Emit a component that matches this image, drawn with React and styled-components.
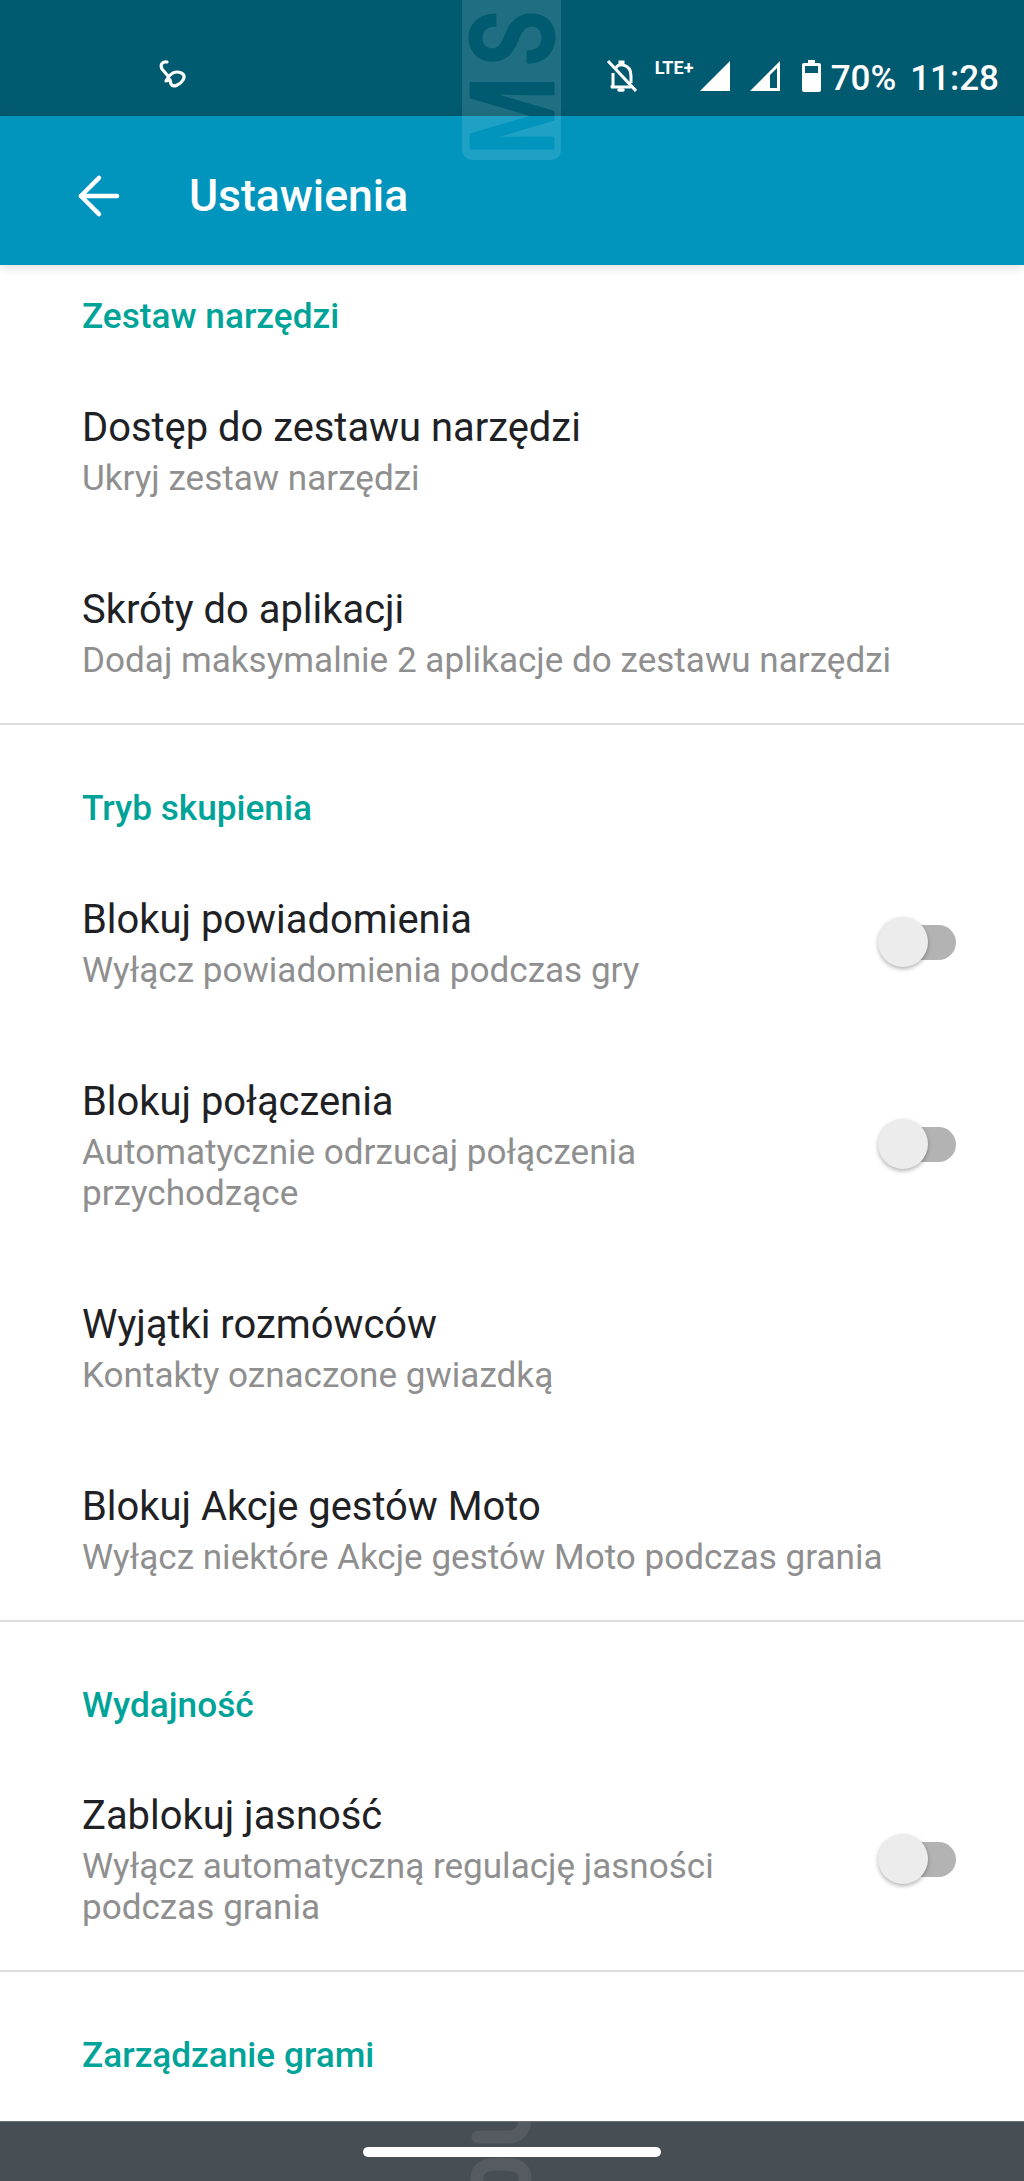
import React from 'react';
import styled, { createGlobalStyle } from 'styled-components';
import { ArrowLeft } from 'lucide-react';

const GlobalStyle = createGlobalStyle`
  html, body {
    margin: 0;
    padding: 0;
    background: #fff;
  }
  body {
    font-family: Roboto, "Noto Sans", sans-serif;
  }
`;

const Page = styled.div`
  position: relative;
  width: 1024px;
  height: 2181px;
  display: flex;
  flex-direction: column;
  overflow: hidden;
  background: #fff;
`;

const StatusBar = styled.div`
  height: 116px;
  flex: none;
  display: flex;
  align-items: flex-start;
  justify-content: space-between;
  padding: 60px 25px 0 158px;
  box-sizing: border-box;
  background: #005a70;
  color: #fff;
`;

const StatusRight = styled.div`
  display: flex;
  align-items: flex-start;
`;

const StatusIcon = styled.svg`
  display: block;
  flex: none;
  margin-left: ${(p) => p.$gap || 0}px;
`;

const NetworkLabel = styled.span`
  font-size: 18px;
  font-weight: 700;
  line-height: 15px;
  margin-left: 18px;
  width: 39px;
  white-space: nowrap;
`;

const StatusText = styled.span`
  font-size: 35px;
  font-weight: 500;
  line-height: 35px;
  margin-left: ${(p) => p.$gap}px;
  padding-top: 1px;
`;

const Watermark = styled.svg`
  position: absolute;
  top: 0;
  left: 462px;
  z-index: 2;
  pointer-events: none;
`;

const AppBar = styled.header`
  height: 149px;
  flex: none;
  display: flex;
  align-items: center;
  padding: 10px 0 0 68px;
  box-sizing: border-box;
  background: #0195bd;
  color: #fff;
  box-shadow: 0 3px 10px rgba(0, 0, 0, 0.12);
  z-index: 1;
`;

const BackArrow = styled(ArrowLeft)`
  flex: none;
`;

const AppTitle = styled.h1`
  margin: 0 0 0 59px;
  font-size: 44.5px;
  font-weight: 500;
  line-height: 52px;
`;

const List = styled.main`
  flex: 1;
  min-height: 0;
`;

const Section = styled.section`
  border-bottom: ${(p) => (p.$last ? 'none' : '2px solid #dcdcdc')};
`;

const SectionTitle = styled.h2`
  margin: 0;
  padding: 59px 82px 18.5px;
  font-size: 35.2px;
  font-weight: 500;
  line-height: 48px;
  color: #00a398;

  ${Section}:first-child & {
    padding: 27px 82px 19px;
  }
`;

const Row = styled.div`
  display: flex;
  align-items: center;
  padding: 43px 68px 42px 82px;
`;

const RowText = styled.div`
  flex: 1;
  min-width: 0;
  padding-right: ${(p) => (p.$toggle ? '82px' : '0')};
`;

const RowTitle = styled.div`
  font-size: 39.9px;
  line-height: 51px;
  color: #202124;
`;

const RowSub = styled.div`
  margin-top: 5px;
  font-size: 35.1px;
  line-height: 41px;
  color: #8f8f8f;
`;

const Toggle = styled.div`
  position: relative;
  flex: none;
  width: 72px;
  height: 35px;
  border-radius: 18px;
  background: #b3b3b3;
`;

const Thumb = styled.div`
  position: absolute;
  left: -6px;
  top: -8px;
  width: 50px;
  height: 50px;
  border-radius: 50%;
  background: #ececec;
  box-shadow: 0 2px 4px rgba(0, 0, 0, 0.3);
`;

const NavBar = styled.footer`
  position: relative;
  height: 60px;
  flex: none;
  display: flex;
  justify-content: center;
  padding-top: 25px;
  box-sizing: border-box;
  background: #474e54;
  border-top: 1px solid #6b7074;
`;

const NavMark = styled.svg`
  position: absolute;
  top: 0;
  left: 462px;
`;

const HomePill = styled.div`
  position: relative;
  width: 298px;
  height: 10px;
  border-radius: 5px;
  background: #fff;
`;

const sections = [
  {
    title: 'Zestaw narzędzi',
    rows: [
      { title: 'Dostęp do zestawu narzędzi', sub: 'Ukryj zestaw narzędzi' },
      { title: 'Skróty do aplikacji', sub: 'Dodaj maksymalnie 2 aplikacje do zestawu narzędzi' },
    ],
  },
  {
    title: 'Tryb skupienia',
    rows: [
      { title: 'Blokuj powiadomienia', sub: 'Wyłącz powiadomienia podczas gry', toggle: true },
      { title: 'Blokuj połączenia', sub: 'Automatycznie odrzucaj połączenia przychodzące', toggle: true },
      { title: 'Wyjątki rozmówców', sub: 'Kontakty oznaczone gwiazdką' },
      { title: 'Blokuj Akcje gestów Moto', sub: 'Wyłącz niektóre Akcje gestów Moto podczas grania' },
    ],
  },
  {
    title: 'Wydajność',
    rows: [
      { title: 'Zablokuj jasność', sub: 'Wyłącz automatyczną regulację jasności podczas grania', toggle: true },
    ],
  },
  { title: 'Zarządzanie grami', rows: [], last: true },
];

const App = () => (
  <Page>
    <GlobalStyle />
    <StatusBar>
      <StatusIcon width="30" height="30" viewBox="0 0 30 30" fill="none" stroke="#fff" strokeWidth="3.2" strokeLinecap="round" strokeLinejoin="round">
        <path d="M9 2 C4 1 2 5 4 9 L10 16 C11 19 10 21 8 21 C10 17 14 12 19 12 C24 12 28 15 25 20 C22 25 15 28 13 24 L12 20" />
      </StatusIcon>
      <StatusRight>
        <StatusIcon width="31" height="32" viewBox="0 0 31 32" fill="none" stroke="#fff" strokeWidth="3">
          <path d="M10 8 C11 6 13 5 14 5 V2 H17 V5 C22 6 25 10 25 16 V23" />
          <path d="M7 13 V26 L5 27 H25" />
          <path d="M13 30 H17" strokeWidth="3.5" strokeLinecap="round" />
          <path d="M2 1 L30 31" />
        </StatusIcon>
        <NetworkLabel>LTE+</NetworkLabel>
        <StatusIcon $gap={5} width="31" height="31" viewBox="0 0 31 31">
          <path d="M31 1 V31 H1 Z" fill="#fff" />
        </StatusIcon>
        <StatusIcon $gap={19} width="31" height="31" viewBox="0 0 31 31">
          <path d="M31 1 V31 H1 Z M28 8 L21 15 V28 H28 Z" fill="#fff" fillRule="evenodd" />
        </StatusIcon>
        <StatusIcon $gap={22} width="19" height="32" viewBox="0 0 19 32">
          <path d="M6 0 H13 V3 H17 Q19 3 19 5 V30 Q19 32 17 32 H2 Q0 32 0 30 V5 Q0 3 2 3 H6 Z M3 6 V13 H16 V6 Z" fill="#fff" fillRule="evenodd" />
        </StatusIcon>
        <StatusText $gap={10}>70%</StatusText>
        <StatusText $gap={14}>11:28</StatusText>
      </StatusRight>
    </StatusBar>
    <Watermark width="99" height="160" viewBox="0 0 99 160">
      <mask id="wm-cut">
        <rect x="0" y="-20" width="99" height="180" rx="10" fill="#fff" />
        <text
          transform="translate(91 155) rotate(-90) scale(0.78 1)"
          fontFamily="Roboto, sans-serif"
          fontSize="115"
          fontWeight="500"
          letterSpacing="14"
          fill="#000"
          stroke="#000"
          strokeWidth="3"
          strokeLinejoin="round"
        >
          MS
        </text>
      </mask>
      <rect x="0" y="-20" width="99" height="180" fill="#fff" fillOpacity="0.12" mask="url(#wm-cut)" />
    </Watermark>
    <AppBar>
      <BackArrow size={62} color="#fff" strokeWidth={1.7} />
      <AppTitle>Ustawienia</AppTitle>
    </AppBar>
    <List>
      {sections.map((section) => (
        <Section key={section.title} $last={section.last}>
          <SectionTitle>{section.title}</SectionTitle>
          {section.rows.map((row) => (
            <Row key={row.title}>
              <RowText $toggle={row.toggle}>
                <RowTitle>{row.title}</RowTitle>
                <RowSub>{row.sub}</RowSub>
              </RowText>
              {row.toggle && (
                <Toggle>
                  <Thumb />
                </Toggle>
              )}
            </Row>
          ))}
        </Section>
      ))}
    </List>
    <NavBar>
      <NavMark width="99" height="59" viewBox="0 0 99 59" fill="none" stroke="#fff" strokeOpacity="0.08" strokeWidth="13" strokeLinecap="round">
        <path d="M16 15 H46 C56 15 63 8 63 -4" />
        <path d="M15 70 V56 C15 43 27 42 39 42 C52 42 63 44 63 56 V70" />
      </NavMark>
      <HomePill />
    </NavBar>
  </Page>
);

export default App;
